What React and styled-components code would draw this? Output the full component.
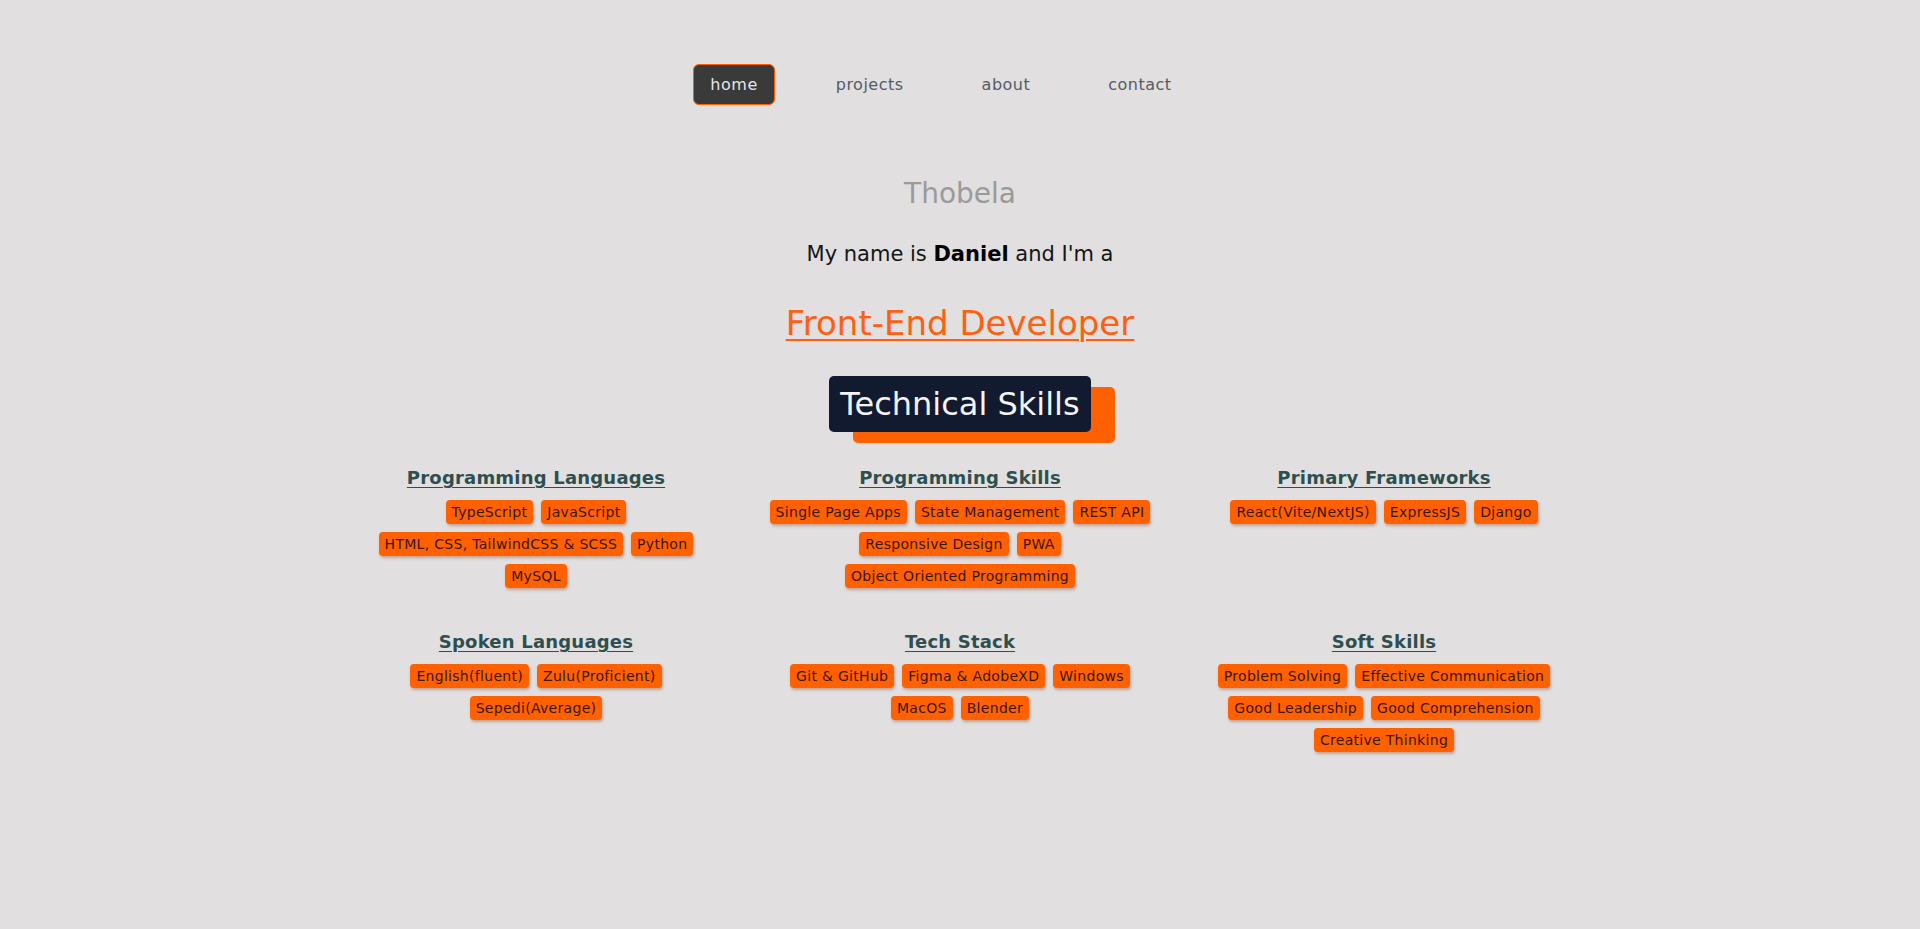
import React from 'react'
import styled, { createGlobalStyle } from 'styled-components'

const GlobalStyle = createGlobalStyle`
    html, body {
        margin: 0;
        padding: 0;
        background: #e1dfe0;
        font-family: "DejaVu Sans", "Liberation Sans", sans-serif;
    }
`;

const Page = styled.div`
    min-height: 929px;
    display: flex;
    flex-direction: column;
    align-items: center;
    padding-top: 64px;
    box-sizing: border-box;
`;

const Nav = styled.nav`
    display: flex;
    justify-content: center;
    gap: 44px;
    padding-right: 38px;
`;

const NavLink = styled.a`
    height: 41px;
    padding: 0 16px;
    box-sizing: border-box;
    display: flex;
    align-items: center;
    font-size: 16px;
    letter-spacing: 0.5px;
    color: ${p => (p.$active ? '#e6e6e6' : '#555b66')};
    background: ${p => (p.$active ? '#3a3a3a' : 'transparent')};
    border: 1px solid ${p => (p.$active ? '#ff5f00' : 'transparent')};
    border-radius: 6px;
    cursor: pointer;
`;

const Greeting = styled.h2`
    margin: 72px 0 0;
    font-size: 28px;
    line-height: 34px;
    font-weight: 400;
    color: #9a9a9a;
`;

const Intro = styled.p`
    margin: 30px 0 0;
    font-size: 21px;
    line-height: 26px;
    color: #151515;

    b {
        font-weight: 700;
        color: #000;
    }
`;

const Role = styled.a`
    margin-top: 36px;
    font-size: 34px;
    line-height: 40px;
    color: #ff5f0f;
    text-decoration: underline;
    text-underline-offset: 4px;
    text-decoration-thickness: 2px;
`;

const SkillsTitle = styled.h1`
    margin: 33px 0 0;
    height: 56px;
    padding: 0 11px;
    display: flex;
    align-items: center;
    font-size: 32px;
    font-weight: 400;
    color: #f4f4f6;
    background: #111a2e;
    border-radius: 5px;
    box-shadow: 24px 11px 0 #ff6000;
`;

const SkillGrid = styled.div`
    margin-top: 34px;
    display: grid;
    grid-template-columns: repeat(3, 380px);
    column-gap: 44px;
    row-gap: 42px;
`;

const SkillGroup = styled.section`
    display: flex;
    flex-direction: column;
    align-items: center;
`;

const GroupTitle = styled.h3`
    margin: 0 0 10px;
    font-size: 18px;
    line-height: 24px;
    font-weight: 700;
    letter-spacing: 0.2px;
    color: #2f4f4f;
    text-decoration: underline;
    text-underline-offset: 3px;
`;

const TagRows = styled.div`
    display: flex;
    flex-direction: column;
    align-items: center;
    gap: 8px;
`;

const TagRow = styled.div`
    display: flex;
    justify-content: center;
    gap: 8px;
`;

const Tag = styled.span`
    height: 24px;
    padding: 0 6px;
    display: flex;
    align-items: center;
    font-size: 14px;
    letter-spacing: 0.3px;
    white-space: nowrap;
    color: #3a1500;
    background: #ff6000;
    border-radius: 4px;
    box-shadow: 1px 2px 3px rgba(140, 50, 0, 0.35);
`;

const groups = [
  {
    title: 'Programming Languages',
    rows: [['TypeScript', 'JavaScript'], ['HTML, CSS, TailwindCSS & SCSS', 'Python'], ['MySQL']],
  },
  {
    title: 'Programming Skills',
    rows: [['Single Page Apps', 'State Management', 'REST API'], ['Responsive Design', 'PWA'], ['Object Oriented Programming']],
  },
  {
    title: 'Primary Frameworks',
    rows: [['React(Vite/NextJS)', 'ExpressJS', 'Django']],
  },
  {
    title: 'Spoken Languages',
    rows: [['English(fluent)', 'Zulu(Proficient)'], ['Sepedi(Average)']],
  },
  {
    title: 'Tech Stack',
    rows: [['Git & GitHub', 'Figma & AdobeXD', 'Windows'], ['MacOS', 'Blender']],
  },
  {
    title: 'Soft Skills',
    rows: [['Problem Solving', 'Effective Communication'], ['Good Leadership', 'Good Comprehension'], ['Creative Thinking']],
  },
];

const links = ['home', 'projects', 'about', 'contact'];

function App() {
  return (
    <Page>
        <GlobalStyle />
        <Nav>
            {links.map(l => (
                <NavLink key={l} $active={l === 'home'}>{l}</NavLink>
            ))}
        </Nav>
        <Greeting>Thobela</Greeting>
        <Intro>My name is <b>Daniel</b> and I'm a</Intro>
        <Role>Front-End Developer</Role>
        <SkillsTitle>Technical Skills</SkillsTitle>
        <SkillGrid>
            {groups.map(g => (
                <SkillGroup key={g.title}>
                    <GroupTitle>{g.title}</GroupTitle>
                    <TagRows>
                        {g.rows.map((row, i) => (
                            <TagRow key={i}>
                                {row.map(t => <Tag key={t}>{t}</Tag>)}
                            </TagRow>
                        ))}
                    </TagRows>
                </SkillGroup>
            ))}
        </SkillGrid>
    </Page>
  )
}

export default App
